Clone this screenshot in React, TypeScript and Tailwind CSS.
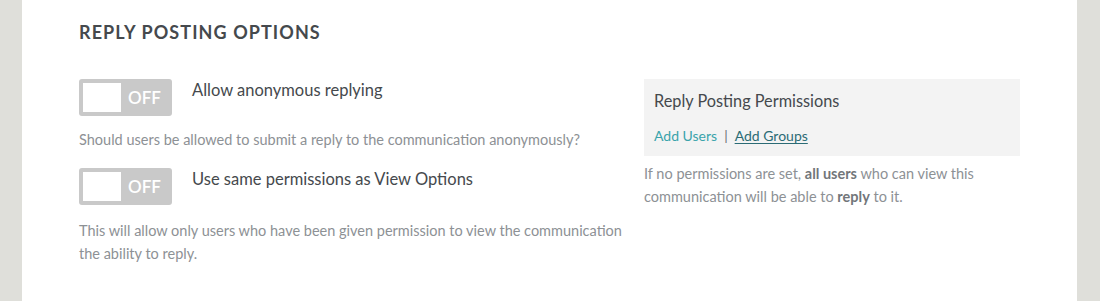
const TOGGLES = [
  {
    label: 'Allow anonymous replying',
    help: 'Should users be allowed to submit a reply to the communication anonymously?',
  },
  {
    label: 'Use same permissions as View Options',
    help: 'This will allow only users who have been given permission to view the communication the ability to reply.',
  },
];

function OffToggle() {
  return (
    <button
      type="button"
      className="flex h-[37px] w-[93px] shrink-0 items-center rounded-[3px] bg-[#c9c9c9] p-[4px]"
    >
      <span className="h-[29px] w-[38px] bg-white" />
      <span className="flex-1 text-center text-[17px] font-semibold text-white">OFF</span>
    </button>
  );
}

export default function App() {
  return (
    <div className="flex h-[301px] w-[1100px] bg-[#dfdfda] px-[22px] pr-[23px] font-['Lato',sans-serif]">
      <div className="flex-1 bg-white px-[57px] pt-[19px]">
        <h2 className="text-[18px] font-bold uppercase tracking-[0.06em] text-[#45494d]">
          Reply Posting Options
        </h2>

        <div className="mt-[33px] grid grid-cols-[552px_376px] gap-x-[13px]">
          {/* Toggles */}
          <div className="flex flex-col">
            {TOGGLES.map((t, i) => (
              <div key={t.label} className={i > 0 ? 'mt-[17px]' : ''}>
                <div className="flex items-start gap-[20px]">
                  <OffToggle />
                  <span className="-mt-[1px] text-[16.5px] text-[#45494d]">{t.label}</span>
                </div>
                <p className={`text-[14.5px] leading-[23px] text-[#8d9195] ${i > 0 ? 'mt-[14px]' : 'mt-[12px]'}`}>
                  {t.help}
                </p>
              </div>
            ))}
          </div>

          {/* Permissions */}
          <div>
            <div className="bg-[#f3f3f3] px-[10px] pb-[10px] pt-[10px]">
              <h3 className="text-[16.3px] text-[#45494d]">Reply Posting Permissions</h3>
              <div className="mt-[12px] flex items-center gap-[7px] text-[14px]">
                <a className="text-[#3aa3ab]">Add Users</a>
                <span className="text-[#6b6f73]">|</span>
                <a className="text-[#2b6b75] underline underline-offset-2">Add Groups</a>
              </div>
            </div>
            <p className="mt-[6px] text-[14.5px] leading-[23px] text-[#8d9195]">
              If no permissions are set, <b className="font-bold text-[#72767a]">all users</b> who can view this
              <br />
              communication will be able to <b className="font-bold text-[#72767a]">reply</b> to it.
            </p>
          </div>
        </div>
      </div>
    </div>
  );
}
